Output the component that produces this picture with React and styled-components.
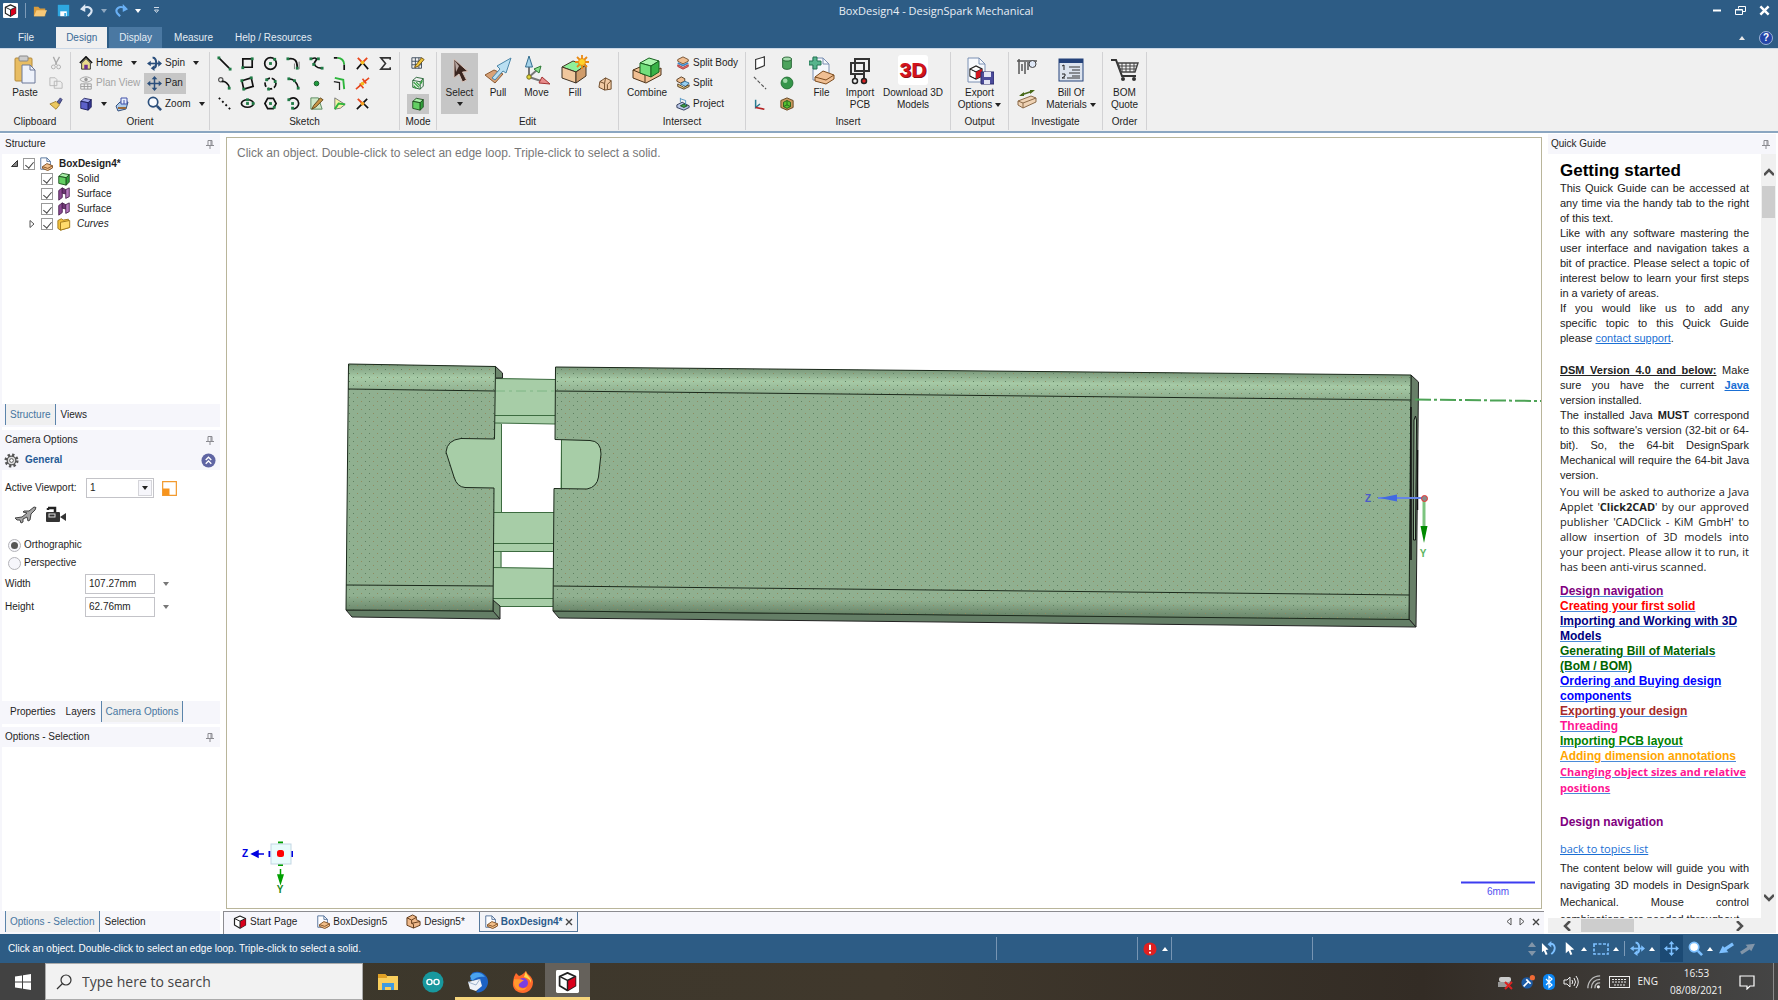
import {useState} from 'react'
import styled, { createGlobalStyle } from 'styled-components'


const UI = '"Liberation Sans", Arial, sans-serif'
const HUMAN = '"Open Sans", "Noto Sans", sans-serif'

const BLUE = '#2d5c85'
const PALE = '#f6f6fb'


const GlobalStyle = createGlobalStyle`
  * { box-sizing: border-box; }
  body {
    margin: 0;
    background: #fff;
    color: #1e1e1e;
    font-family: ${UI};
    font-size: 10px;
    line-height: 14px;
  }
  button, input, select { font: inherit; color: inherit; }
  button {
    padding: 0;
    border: 0;
    background: none;
    display: flex;
    align-items: center;
    white-space: nowrap;
  }
  svg { display: block; flex: none; }
`

const Page = styled.div`
  height: 100vh;
  display: flex;
  flex-direction: column;
  overflow: hidden;
`


/* ---------- small drawings ---------- */

const Svg = ({ s = 14, w, h, box = '0 0 16 16', children }) => (
  <svg width={w || s} height={h || s} viewBox={box} fill="none" aria-hidden="true">{children}</svg>
)

const Cube = ({ top = '#a8f0a8', left = '#63cf63', right = '#2fa03a', line = '#1b4d1b', ...rest }) => (
  <Svg {...rest}>
    <g stroke={line} strokeLinejoin="round">
      <path d="M2 5 6 1.500 14 3 10.500 6.500Z" fill={top} />
      <path d="M2 5 10.500 6.500V15L2 13Z" fill={left} />
      <path d="M10.500 6.500 14 3V11.500L10.500 15Z" fill={right} />
    </g>
  </Svg>
)

const Logo = ({ s = 16, plain }) => (
  <Svg s={s} box={plain ? '1.500 1 13 14' : '0 0 16 16'}>
    {!plain && <rect width="16" height="16" rx="1" fill="#fff" />}
    <path d="M8 2 13.500 4.500V11L8 14.200 2.500 11V4.500Z" fill="#fff" stroke="#222" strokeWidth="1.200" strokeLinejoin="round" />
    <path d="M8 7.200 13.500 4.700V11L8 14.200Z" fill="#d9001b" />
    <path d="M2.500 4.500 8 7.200 13.500 4.500M8 7.200V14" stroke="#222" />
  </Svg>
)

const Caret = ({ color = '#222', up }) => (
  <Svg w={6} h={4} box="0 0 6 4"><path d={up ? 'M0 4H6L3 0Z' : 'M0 0H6L3 4Z'} fill={color} /></Svg>
)

const DocIcon = ({ s = 14 }) => (
  <Svg s={s}>
    <path d="M2 1H9L13 5V14H2Z" fill="#fdfdff" stroke="#4a6a95" />
    <path d="M9 1V5H13" stroke="#4a6a95" />
    <path d="M4 11 9 7.500 15.500 10V12.500L10 15.500 4 13Z" fill="#f2bf8a" stroke="#7c4c1f" />
    <path d="M4 11 10 13 15.500 10" stroke="#7c4c1f" />
  </Svg>
)

const SolidIcon = ({ s = 16 }) => (
  <Svg s={s}>
    <path d="M1 4 7 1 11 3 11 6 15 8V12L8 15 1 12Z" fill="#efb98a" stroke="#5e3817" strokeLinejoin="round" />
    <path d="M1 4 6 6.500 11 3.500M6 6.500V10L15 8M6 10 8 11V15" stroke="#5e3817" />
  </Svg>
)

const PanIcon = ({ color = '#2b4f7c', s = 15 }) => (
  <Svg s={s}>
    <path d="M8 2V14M2 8H14" stroke={color} strokeWidth="1.600" />
    <path d="M8 0 11 3.500H5ZM8 16 5 12.500H11ZM0 8 3.500 5V11ZM16 8 12.500 11V5Z" fill={color} />
  </Svg>
)

const SpinIcon = ({ color = '#2b4f7c', s = 15 }) => (
  <Svg s={s}>
    <path d="M2 8H14" stroke={color} strokeWidth="1.800" />
    <path d="M6 2C10.500 1 11 11 7.500 13" stroke={color} strokeWidth="2.200" />
    <path d="M0 8 4 5V11ZM16 8 12 11.500V4.500ZM4 13 8 9.500V16Z" fill={color} />
  </Svg>
)

const ZoomIcon = ({ color = '#2b4f7c', fill = '#f8fbff', s = 15 }) => (
  <Svg s={s}>
    <circle cx="6.500" cy="6.500" r="5" fill={fill} stroke={color} strokeWidth="1.800" />
    <path d="M10.500 10.500 15 15" stroke={color} strokeWidth="2.800" />
  </Svg>
)

const PinIcon = () => (
  <Svg w={8} h={9} box="0 0 8 9"><path d="M2 .5H6V5.500M2 .5V5.500M0 5.500H8M4 5.500V9M5 1V5" stroke="#8a8a90" /></Svg>
)

const D = ({ at }) => at.map(([x, y]) => <rect key={`${x},${y}`} x={x - 1.5} y={y - 1.5} width="3" height="3" fill="#1f7a45" />)
const INK = { stroke: '#111', strokeWidth: 1.8 }

const Sketch = {
  line: <><path d="M2 2 13 13" {...INK} /><D at={[[2, 2], [14, 14]]} /></>,
  rect: <><path d="M3 3H13V12H3Z" {...INK} /><D at={[[3, 12.5], [13, 3]]} /></>,
  circle: <><circle cx="8" cy="8" r="6.200" {...INK} /><D at={[[8, 8], [12.5, 3.5]]} /></>,
  arc: <><path d="M3 3C9 2 12 5 12 12" {...INK} /><D at={[[2, 3], [12, 13]]} /><path d="M9 8V14M14 6V14" stroke="#777" /></>,
  spline: <><path d="M3 3C8 1 9 3 6.500 6 4 9 8 13 13 13" {...INK} /><D at={[[2, 3], [10, 3], [5, 9], [14, 13]]} /></>,
  corner: <><path d="M2 2H6M13 9V15" {...INK} /><path d="M6 2C10 2 13 5 13 9" stroke="#2db53c" strokeWidth="2" /></>,
  trim: <><path d="M2 14 8 7 14 14" {...INK} /><path d="M3 2 8 7 13 2" stroke="#e9471d" strokeWidth="2" /><circle cx="8" cy="7" r="2" fill="#f5bb20" /></>,
  sigma: <path d="M13 4V2H3L8 8 3 14H13V12" stroke="#333" strokeWidth="1.700" />,
  tangent: <><circle cx="4" cy="4" r="2.300" stroke="#555" strokeWidth="1.300" /><path d="M5 6C8 5 13 8 13 13" {...INK} /><D at={[[13, 13]]} /></>,
  rect3: <><path d="M2 5 12 2 14 11 4 14Z" {...INK} /><D at={[[2, 5], [12, 2], [4, 14]]} /></>,
  circle3: <><circle cx="8" cy="8" r="5.800" {...INK} strokeDasharray="5 2" /><D at={[[4, 4], [13, 6], [6, 14]]} /></>,
  arc3: <><path d="M3 3C8 3 12 7 13 13" {...INK} /><D at={[[3, 3], [9, 5], [13, 13]]} /></>,
  point: <circle cx="8" cy="8" r="2.500" fill="#1f9a3d" stroke="#175c2a" />,
  offset: <><path d="M2 6 8 7V15" stroke="#222" strokeWidth="1.300" /><path d="M3 2 12 4 13 14" stroke="#2db53c" strokeWidth="2" /></>,
  split: <><path d="M3 12 12 4" stroke="#222" /><path d="M1 14 7 9M9 7 15 2M5 8 9 13M8 3 12 8" stroke="#e9471d" strokeWidth="1.700" /><circle cx="8" cy="8" r="2" fill="#f5bb20" /></>,
  dots: <path d="M2 2 14 14" stroke="#111" strokeWidth="2" strokeDasharray="2 3" />,
  ellipse: <><ellipse cx="8" cy="8" rx="6.500" ry="4" {...INK} /><D at={[[8, 8], [8, 4], [14, 8]]} /></>,
  polygon: <><path d="M5 2.500H11L14 8 11 13.500H5L2 8Z" {...INK} /><D at={[[8, 8], [12, 12]]} /></>,
  arcSweep: <><path d="M3 4C9-1 15 5 13 10 11 14 8 14 7 13" {...INK} /><D at={[[3, 4], [7, 8], [7, 13]]} /></>,
  pencil: <><path d="M2 2H10L14 14H2Z" fill="#cfe8c8" stroke="#57875c" /><path d="M3 14 5 10 12 2 15 4 7 12Z" fill="#c89545" stroke="#5c4215" /></>,
  project: <><path d="M3 2 14 9 9 13 3 14Z" fill="#f4f4a8" stroke="#777" /><path d="M3 14 7 8 14 9" stroke="#2db53c" strokeWidth="2" /></>,
  bend: <><path d="M2 14 13 3M9 8 14 13" {...INK} /><path d="M3 3 8 8" stroke="#e9471d" strokeWidth="2" /><circle cx="8" cy="8" r="2" fill="#f5a020" /></>,
}
const sketchOrder = [
  'line', 'rect', 'circle', 'arc', 'spline', 'corner', 'trim', 'sigma',
  'tangent', 'rect3', 'circle3', 'arc3', 'point', 'offset', 'split', null,
  'dots', 'ellipse', 'polygon', 'arcSweep', 'pencil', 'project', 'bend', null,
]


/* ---------- title bar and tabs ---------- */

const TitleBar = styled.header`
  height: 27px;
  flex: none;
  display: flex;
  align-items: center;
  padding: 0 8px 6px 3px;
  background: ${BLUE};
  color: #e8eef5;
`
const QuickAccess = styled.div`
  display: flex;
  align-items: center;
  gap: 7px;
`
const Spaced = styled.span`
  padding-right: 3px;
`
const Rule = styled.span`
  width: 1px;
  height: 15px;
  background: #7d9bb8;
`
const WindowButtons = styled.div`
  display: flex;
  gap: 13px;
`
const AppTitle = styled.h1`
  flex: 1;
  margin: 0;
  text-align: center;
  font: 11px/14px ${HUMAN};
`
const TabRow = styled.nav`
  height: 21px;
  flex: none;
  display: flex;
  gap: 2px;
  padding-right: 5px;
  background: ${BLUE};
`
const RibbonTab = styled.button`
  padding: 0 10px;
  background: ${p => p.$active ? '#f0f0f0' : p.$hover ? '#4a78a2' : 'none'};
  color: ${p => p.$active ? '#3a6a97' : '#e4ecf4'};
  &:first-child { padding: 0 20px 0 18px; }
`
const TabEnd = styled.div`
  margin-left: auto;
  display: flex;
  align-items: center;
  gap: 14px;
`
const HelpDot = styled.button`
  width: 14px;
  height: 14px;
  justify-content: center;
  border: 1px solid #9db4d6;
  border-radius: 50%;
  background: #2445a8;
  color: #fff;
  font-weight: bold;
`


/* ---------- ribbon ---------- */

const Ribbon = styled.section`
  height: 85px;
  flex: none;
  display: flex;
  padding: 3px 0 1px;
  border-top: 1px solid #ccd8e6;
  border-bottom: 2px solid #8ba6c1;
  background: #f0f0f0;
`
const Group = styled.div`
  width: ${p => p.$w}px;
  display: flex;
  flex-direction: column;
  border-right: 1px solid #d2d2d4;
`
const GroupBody = styled.div`
  height: 62px;
  flex: none;
  display: flex;
  padding: 1px 0 0 ${p => p.$pad || 0}px;
`
const GroupName = styled.div`
  text-align: center;
  line-height: 16px;
`
const BigButton = styled.button`
  width: ${p => p.$w}px;
  height: 61px;
  flex-direction: column;
  justify-content: flex-start;
  background: ${p => p.$on ? '#c6c6c6' : 'none'};
  line-height: 12px;
  text-align: center;
`
const BigPicture = styled.span`
  height: 34px;
  display: grid;
  place-items: center;
`
const BigLabel = styled.span`
  display: flex;
  align-items: center;
  gap: 3px;
`
const ToolColumn = styled.div`
  width: ${p => p.$w ? `${p.$w}px` : 'auto'};
  display: grid;
  grid-template-rows: repeat(${p => p.$rows || 3}, 1fr);
  justify-items: ${p => p.$center ? 'center' : 'start'};
`
const Tool = styled.button`
  gap: 3px;
  padding: 0 3px;
  min-width: ${p => p.$square ? '22px' : '0'};
  justify-content: center;
  background: ${p => p.$on ? '#c6c6c6' : 'none'};
  color: ${p => p.$off ? '#a3a3a3' : 'inherit'};
  > svg + svg, > span + svg { margin-left: 5px; }
`
const SketchGrid = styled.div`
  display: grid;
  grid-template-columns: repeat(8, 23px);
  grid-template-rows: repeat(3, 1fr);
`

const Big = ({ w, on, icon, lines, caret }) => (
  <BigButton $w={w} $on={on}>
    <BigPicture>{icon}</BigPicture>
    {lines.map((l, i) => (
      <BigLabel key={l}>{l}{caret === 'inline' && i === lines.length - 1 && <Caret />}</BigLabel>
    ))}
    {caret === 'below' && <Svg w={6} h={8} box="0 0 6 8"><path d="M0 3H6L3 7Z" fill="#222" /></Svg>}
  </BigButton>
)

const PasteIcon = (
  <Svg w={24} h={30} box="0 0 24 30">
    <rect x="2" y="3" width="17" height="23" rx="1" fill="#e8bd63" stroke="#b48a3a" />
    <rect x="6" y="1" width="9" height="5" rx="1" fill="#ccc" stroke="#888" />
    <path d="M9 10H17L22 15V28H9Z" fill="#eef2fb" stroke="#6d7898" />
    <path d="M17 10V15H22" stroke="#6d7898" />
  </Svg>
)
const SelectIcon = (
  <Svg w={24} h={30} box="0 0 24 30">
    <path d="M6 4 20 16.500 14.500 17 18.500 25 14.500 27 11 19 6 23Z" fill="#3a2620" stroke="#d8c0b5" />
    <path d="M7 6 11 11 8 17Z" fill="#b9a8a3" />
  </Svg>
)
const PullIcon = (
  <Svg w={30} h={30} box="0 0 30 30">
    <path d="M2 20 11 15 20 19 12 28Z" fill="#d8a277" stroke="#8b5a33" />
    <path d="M9 23 17 14 14 11 28 3 23 18 20 16 12 25Z" fill="#b9dff2" stroke="#4b86a8" strokeLinejoin="round" />
  </Svg>
)
const MoveIcon = (
  <Svg w={28} h={30} box="0 0 28 30">
    <path d="M6 22V9M6 22 14 15M6 22 18 26" stroke="#777" strokeWidth="2" />
    <path d="M6 1 9.500 12H2.500Z" fill="#a5d3ea" stroke="#356f90" />
    <path d="M18 11 16 18 11 14Z" fill="#8be08b" stroke="#2c7a35" />
    <path d="M27 29 16 28 19 22Z" fill="#e88b8b" stroke="#a33333" />
    <circle cx="6" cy="22" r="2.200" fill="#e0d53a" stroke="#77701a" />
  </Svg>
)
const FillIcon = (
  <Svg w={30} h={30} box="0 0 30 30">
    <g stroke="#3f3324" strokeLinejoin="round">
      <path d="M2 12 13 6 26 10 16 17Z" fill="#8ff09a" />
      <path d="M2 12 16 17V28L2 23Z" fill="#f0c79d" />
      <path d="M16 17 26 10V21L16 28Z" fill="#cf9c6b" />
    </g>
    <path d="M22 0V14M15 7H29M17 2 27 12M27 2 17 12" stroke="#e98a15" strokeWidth="1.800" />
    <circle cx="22" cy="7" r="3.500" fill="#ffd32a" stroke="#e98a15" />
  </Svg>
)
const CombineIcon = (
  <Svg w={32} h={30} box="0 0 32 30">
    <path d="M2 15 9 12 16 20 30 13V20L15 28 2 23Z" fill="#f0bf93" stroke="#4d3218" strokeLinejoin="round" />
    <path d="M2 15 14 20V27" stroke="#4d3218" />
    <g stroke="#17601f" strokeLinejoin="round">
      <path d="M9 8 18 3 28 6 20 11Z" fill="#a9f5ad" />
      <path d="M9 8 20 11V22L9 18Z" fill="#72df7c" />
      <path d="M20 11 28 6V17L20 22Z" fill="#37b246" />
    </g>
  </Svg>
)
const FileIcon = (
  <Svg w={26} h={30} box="0 0 26 30">
    <path d="M4 3H14L20 9V25H4Z" fill="#f4f7fc" stroke="#7b90b3" />
    <path d="M14 3V9H20" stroke="#7b90b3" />
    <path d="M6 22 14 16 25 20V24L17 29 6 26Z" fill="#f0bf93" stroke="#7c4c1f" />
    <path d="M6 22 17 25 25 20" stroke="#7c4c1f" />
    <path d="M4 2H8V6H12V10H8V14H4V10H0V6H4Z" fill="#56b48c" stroke="#237453" />
  </Svg>
)
const PcbIcon = (
  <Svg w={24} h={30} box="0 0 24 30">
    <path d="M7 4H21V16H7ZM3 8H16V19H3Z" stroke="#333" strokeWidth="2" />
    <path d="M7 19V24M16 19V24" stroke="#333" strokeWidth="2" />
    <circle cx="7" cy="26" r="2.500" stroke="#222" strokeWidth="1.500" />
    <circle cx="16" cy="26" r="2.500" fill="#d22" stroke="#222" strokeWidth="1.500" />
  </Svg>
)
const ThreeD = styled.span`
  width: 30px;
  height: 30px;
  display: grid;
  place-items: center;
  border-radius: 3px;
  background: #fff;
  color: #d3131d;
  font: bold 21px/30px ${UI};
  text-shadow: 1px 1px 0 #8d0c13;
`
const ExportIcon = (
  <Svg w={28} h={30} box="0 0 28 30">
    <path d="M2 3H13L19 9V27H2Z" fill="#f7f9fd" stroke="#7b90b3" />
    <path d="M13 3V9H19" stroke="#7b90b3" />
    <path d="M4 14 10 11 16 14V21L10 24 4 21ZM4 14 10 17 16 14M10 17V24" fill="#fff" stroke="#222" strokeWidth="1.300" />
    <path d="M4.500 15 9.500 17.500V23L4.500 20.500Z" fill="#fff" />
    <path d="M10 17 16 14V21L10 24Z" fill="#d3131d" />
    <path d="M15 17H28V29H15Z" fill="#4b4b9a" stroke="#2d2d6d" />
    <path d="M18 17H25V22H18ZM18 25H24V29H18Z" fill="#e3e4f4" />
  </Svg>
)
const BomIcon = (
  <Svg w={26} h={30} box="0 0 26 30">
    <rect x="1" y="4" width="24" height="22" fill="#dce3ee" stroke="#24427a" />
    <path d="M1 6H25" stroke="#24427a" strokeWidth="4" />
    <path d="M11 12H22M14 15H22M11 18H22M14 21H22M9 23H22" stroke="#333" />
    <path d="M4 11 6 10V15M4 19H7V21L4 23H7" stroke="#222" />
  </Svg>
)
const CartIcon = (
  <Svg w={30} h={30} box="0 0 30 30">
    <path d="M1 5H6L12 21H26" stroke="#333" strokeWidth="2" />
    <path d="M8 8H28L25 17H11Z" stroke="#444" strokeWidth="1.400" />
    <path d="M12 8V17M16 8V17M20 8V17M24 8V17M9 11H27M10 14H26" stroke="#444" />
    <circle cx="13" cy="24" r="2" fill="#333" /><circle cx="24" cy="24" r="2" fill="#333" />
  </Svg>
)

const RibbonBar = () => (
  <Ribbon>
    <Group $w={71}>
      <GroupBody $pad={2}>
        <Big w={46} icon={PasteIcon} lines={['Paste']} />
        <ToolColumn $w={16} $center>
          <Tool aria-label="Cut"><Svg><path d="M5 1 9 10M12 1 7 10" stroke="#aaa" strokeWidth="1.500" /><circle cx="5" cy="12.500" r="2.200" stroke="#aaa" /><circle cx="11" cy="12.500" r="2.200" stroke="#aaa" /></Svg></Tool>
          <Tool aria-label="Copy"><Svg><path d="M1 2H7L9 4V11H1ZM6 6H13L15 8V14H6Z" fill="#eee" stroke="#b5b5b5" /></Svg></Tool>
          <Tool aria-label="Format painter"><Svg><path d="M9 6 13 1 15 3 12 8Z" fill="#5a5fa0" stroke="#33386d" /><path d="M1 8 8 5 12 9 8 14Z" fill="#ecc85f" stroke="#a27e2a" /></Svg></Tool>
        </ToolColumn>
      </GroupBody>
      <GroupName>Clipboard</GroupName>
    </Group>

    <Group $w={139}>
      <GroupBody $pad={5}>
        <ToolColumn $w={68}>
          <Tool><Svg><path d="M1 8 8 1 15 8" stroke="#111" strokeWidth="2" /><path d="M3 8V15H13V8L8 3Z" fill="#e8d98b" stroke="#222" /><path d="M6 15V10H10V15" fill="#6c2f8f" /></Svg><span>Home</span><Caret /></Tool>
          <Tool $off><Svg><path d="M1 4C5 0 11 0 15 4 11 8 5 8 1 4Z" stroke="#999" /><circle cx="8" cy="4" r="2" fill="#999" /><path d="M2 9H14V15H2ZM2 12H14M6 9V15M10 9V15" stroke="#999" /></Svg><span>Plan View</span></Tool>
          <Tool aria-label="Face view"><Cube top="#9aa0ea" left="#5c60c9" right="#34368f" line="#1d1e5a" /><Caret /><Svg s={16}><path d="M1 10 5 6H13L11 13 3 15Z" fill="#aecdec" stroke="#35507d" /><path d="M3 12H11" stroke="#9a6a3c" strokeWidth="2" /><path d="M6 2H12V8H6ZM9 4V8" fill="#e9f1ff" stroke="#4050a8" /></Svg></Tool>
        </ToolColumn>
        <ToolColumn>
          <Tool><SpinIcon /><span>Spin</span><Caret /></Tool>
          <Tool $on><PanIcon /><span>Pan</span></Tool>
          <Tool><ZoomIcon /><span>Zoom</span><Caret /></Tool>
        </ToolColumn>
      </GroupBody>
      <GroupName>Orient</GroupName>
    </Group>

    <Group $w={190}>
      <GroupBody $pad={3}>
        <SketchGrid>
          {sketchOrder.map((name, i) => name
            ? <Tool key={name} aria-label={name}><Svg s={15}>{Sketch[name]}</Svg></Tool>
            : <span key={i} />)}
        </SketchGrid>
      </GroupBody>
      <GroupName>Sketch</GroupName>
    </Group>

    <Group $w={37}>
      <GroupBody $pad={7}>
        <ToolColumn $center>
          <Tool $square aria-label="Sketch mode"><Svg><path d="M1 2H12V14H1ZM1 6H12M1 10H12M5 2V14M9 2V14" stroke="#345" /><path d="M5 11 12 2 15 4 8 12 4 13Z" fill="#edc33b" stroke="#6b4d10" /></Svg></Tool>
          <Tool $square aria-label="Section mode"><Svg><path d="M2 5 6 1.500 14 3 10.500 6.500ZM2 5V13L10.500 15V6.500M10.500 15 14 11.500V3" stroke="#1b5d2b" /><path d="M3 7 9 13M6 7 10 11M3 11 6 14M11 9 13 5" stroke="#2fa03a" strokeWidth="1.500" /></Svg></Tool>
          <Tool $square $on aria-label="3D mode"><Cube /></Tool>
        </ToolColumn>
      </GroupBody>
      <GroupName>Mode</GroupName>
    </Group>

    <Group $w={182}>
      <GroupBody $pad={4}>
        <Big w={37} on icon={SelectIcon} lines={['Select']} caret="below" />
        <Big w={40} icon={PullIcon} lines={['Pull']} />
        <Big w={37} icon={MoveIcon} lines={['Move']} />
        <Big w={40} icon={FillIcon} lines={['Fill']} />
        <ToolColumn $w={20} $rows={1}>
          <Tool aria-label="Shell"><Svg s={15}><path d="M2 6 8 2 14 5V14L7 15 1 12Z" fill="#f2cba5" stroke="#6b4726" /><path d="M2 6 7 8 8 2M7 8V15M14 5 10 9V14" stroke="#6b4726" /></Svg></Tool>
        </ToolColumn>
      </GroupBody>
      <GroupName>Edit</GroupName>
    </Group>

    <Group $w={127}>
      <GroupBody $pad={2}>
        <Big w={52} icon={CombineIcon} lines={['Combine']} />
        <ToolColumn>
          <Tool><Svg><path d="M2 4 8 1 14 4V6L8 9 2 6Z" fill="#f0bf93" stroke="#6b4726" /><path d="M2 8 8 11 14 8" stroke="#3a86c8" strokeWidth="2" /><path d="M2 10 8 13 14 10V12L8 15 2 12Z" fill="#e57777" stroke="#a33" /></Svg><span>Split Body</span></Tool>
          <Tool><Svg><path d="M1 4 6 1 10 3V6L5 8 1 6Z" fill="#f0bf93" stroke="#4d3218" /><path d="M5 9 10 6 15 8 11 12Z" fill="#9bd0f0" stroke="#2d6a95" /><path d="M2 9V12L9 15 15 12V10L9 13Z" fill="#e9d085" stroke="#4d3218" /></Svg><span>Split</span></Tool>
          <Tool><Svg><path d="M1 9 7 6 15 10V12L9 15 1 12Z" fill="#b9c7e8" stroke="#26304f" /><path d="M5 10 9 8 13 10 9 12Z" fill="#3aa04a" stroke="#1b4d1b" /><path d="M5 1V6M5 2 11 4V9" stroke="#4a90c0" /></Svg><span>Project</span></Tool>
        </ToolColumn>
      </GroupBody>
      <GroupName>Intersect</GroupName>
    </Group>

    <Group $w={205}>
      <GroupBody $pad={1}>
        <ToolColumn $w={26} $center>
          <Tool aria-label="Plane"><Svg><path d="M3 4 13 1V11L3 15Z" fill="#fff" stroke="#333" strokeWidth="1.300" /></Svg></Tool>
          <Tool aria-label="Axis"><Svg><path d="M1 1 15 15" stroke="#555" strokeWidth="1.300" strokeDasharray="4 2" /></Svg></Tool>
          <Tool aria-label="Origin"><Svg><path d="M3 3V12L8 8" stroke="#287a8f" strokeWidth="1.700" /><path d="M3 12 13 14" stroke="#b52222" strokeWidth="2" /></Svg></Tool>
        </ToolColumn>
        <ToolColumn $w={27} $center>
          <Tool aria-label="Cylinder"><Svg><path d="M3 3V13C4 16 12 16 13 13V3Z" fill="#4da35d" stroke="#1f5e2d" /><ellipse cx="8" cy="3.500" rx="5" ry="2.300" fill="#a6dcae" stroke="#1f5e2d" /></Svg></Tool>
          <Tool aria-label="Sphere"><Svg><circle cx="8" cy="8" r="6.800" fill="#35954a" stroke="#1f6b30" /><circle cx="6" cy="5.500" r="2.600" fill="#9fd9a8" /></Svg></Tool>
          <Tool aria-label="Shell box"><Svg><path d="M8 1 15 4V12L8 15 1 12V4Z" fill="#c99a5e" stroke="#5b3c16" /><path d="M8 4 12 6V11L8 13 4 11V6Z" fill="#57c02f" stroke="#1f5e1b" /><path d="M8 4V9L4 11M8 9 12 11" stroke="#1f5e1b" /></Svg></Tool>
        </ToolColumn>
        <Big w={43} icon={FileIcon} lines={['File']} />
        <Big w={34} icon={PcbIcon} lines={['Import', 'PCB']} />
        <Big w={72} icon={<ThreeD>3D</ThreeD>} lines={['Download 3D', 'Models']} />
      </GroupBody>
      <GroupName>Insert</GroupName>
    </Group>

    <Group $w={58}>
      <GroupBody>
        <Big w={57} icon={ExportIcon} lines={['Export', 'Options']} caret="inline" />
      </GroupBody>
      <GroupName>Output</GroupName>
    </Group>

    <Group $w={94}>
      <GroupBody $pad={4}>
        <ToolColumn $w={28} $rows={2} $center>
          <Tool aria-label="Measure"><Svg w={22} h={20} box="0 0 22 20"><path d="M1 3H21M3 1V16M6 6V13M9 4V16M12 4V12" stroke="#555" strokeWidth="1.500" /><circle cx="16.500" cy="6" r="3.500" fill="#dfe8f7" stroke="#444" /></Svg></Tool>
          <Tool aria-label="Dimension"><Svg w={20} h={20} box="0 0 20 20"><path d="M1 12 14 7 19 9V13L6 19 1 16Z" fill="#efd3b5" stroke="#8b6a48" /><path d="M1 12 6 14 19 9M6 14V19" stroke="#8b6a48" /><path d="M4 6 16 2" stroke="#4a6a1a" strokeWidth="1.500" /><path d="M2 7 7 3V7ZM18 1 13 1V5Z" fill="#4a6a1a" /></Svg></Tool>
        </ToolColumn>
        <Big w={60} icon={BomIcon} lines={['Bill Of', 'Materials']} caret="inline" />
      </GroupBody>
      <GroupName>Investigate</GroupName>
    </Group>

    <Group $w={44}>
      <GroupBody>
        <Big w={43} icon={CartIcon} lines={['BOM', 'Quote']} />
      </GroupBody>
      <GroupName>Order</GroupName>
    </Group>
  </Ribbon>
)


/* ---------- left docks ---------- */

const Workspace = styled.main`
  flex: 1;
  min-height: 0;
  display: flex;
  padding-top: 1px;
`
const LeftDock = styled.aside`
  width: 223px;
  flex: none;
  display: flex;
  flex-direction: column;
  gap: 3px;
  padding-right: 3px;
  border-left: 2px solid ${PALE};
`
const Panel = styled.section`
  flex: ${p => p.$grow} 1 0;
  min-height: 0;
  display: flex;
  flex-direction: column;
`
const PanelTitle = styled.h2`
  margin: 0;
  height: 20px;
  flex: none;
  display: flex;
  justify-content: space-between;
  align-items: center;
  padding: 0 6px 0 3px;
  background: ${PALE};
  font-size: 10px;
  font-weight: normal;
`
const PanelBody = styled.div`
  flex: 1;
  min-height: 0;
`
const PanelTabs = styled.div`
  height: 23px;
  flex: none;
  display: flex;
  padding: 0 3px 2px;
  background: ${PALE};
`
const PanelTab = styled.button`
  padding: 0 4px;
  border: solid ${p => p.$on ? '#5b84ab' : 'transparent'};
  border-width: 0 1px;
  background: ${p => p.$on ? '#f0f0f0' : 'none'};
  color: ${p => p.$on ? '#4776a0' : 'inherit'};
`
const Tree = styled.ul`
  margin: 0;
  padding: 2px 0;
  list-style: none;
`
const Leaf = styled.li`
  height: 15px;
  display: flex;
  align-items: center;
  gap: 5px;
  padding-left: ${p => p.$root ? 9 : 27}px;
  font-weight: ${p => p.$root ? 'bold' : 'normal'};
  font-style: ${p => p.$italic ? 'italic' : 'normal'};
  label { display: flex; align-items: center; gap: 4px; }
  label > span { padding-left: 2px; }
`
const Tick = styled.input`
  appearance: none;
  width: 12px;
  height: 12px;
  margin: 0;
  display: grid;
  place-items: center;
  border: 1px solid #9a9a9a;
  background: #fff;
  &:checked::after {
    content: '';
    width: 4px;
    height: 7px;
    border: solid #444;
    border-width: 0 1px 1px 0;
    transform: rotate(40deg);
  }
`
const Twisty = styled.span`
  width: 7px;
`
const SubTitle = styled.h3`
  margin: 0;
  height: 20px;
  flex: none;
  display: flex;
  align-items: center;
  gap: 6px;
  padding: 0 4px 0 2px;
  background: ${PALE};
  color: #245a94;
  font-size: 10px;
  > button { margin-left: auto; }
`
const Form = styled.form`
  padding: 8px 0 0 3px;
`
const FormRow = styled.div`
  height: ${p => p.$h}px;
  display: grid;
  grid-template-columns: ${p => p.$cols || '80px 70px auto'};
  align-items: center;
  justify-content: start;
`
const Combo = styled.span`
  height: 20px;
  display: flex;
  align-items: center;
  border: 1px solid #c3c3c8;
  background: #fff;
  select {
    flex: 1;
    min-width: 0;
    padding: 0 3px;
    appearance: none;
    border: 0;
    background: none;
  }
  > span {
    width: 14px;
    height: 16px;
    margin-right: 1px;
    display: grid;
    place-items: center;
    border: 1px solid #d5d5da;
    background: ${PALE};
  }
`
const Field = styled.input`
  height: 20px;
  min-width: 0;
  padding: 0 3px;
  border: 1px solid #c3c3c8;
  background: #fff;
`
const IconRow = styled.div`
  height: 34px;
  display: flex;
  align-items: center;
  gap: 8px;
  margin-bottom: 4px;
  padding-left: 9px;
`
const RadioLabel = styled.label`
  height: 18px;
  display: flex;
  align-items: center;
  gap: 3px;
  padding-left: 3px;
`
const Radio = styled.input`
  appearance: none;
  width: 13px;
  height: 13px;
  margin: 0;
  display: grid;
  place-items: center;
  border: 1px solid #b3b3b8;
  border-radius: 50%;
  background: ${PALE};
  &:checked::after {
    content: '';
    width: 7px;
    height: 7px;
    border-radius: 50%;
    background: #555;
  }
`
const Indent = styled.span`
  padding-left: 8px;
`

const SurfaceIcon = () => (
  <Svg><path d="M2 4 6 1V12L2 15Z" fill="#8d4a94" stroke="#47204d" /><path d="M6 1 10 3V8L6 7Z" fill="#6f3576" stroke="#47204d" /><path d="M10 3 14 1V11L10 13Z" fill="#b77abf" stroke="#47204d" /></Svg>
)
const FolderIcon = ({ s = 14 }) => (
  <Svg s={s}><path d="M1 4 5 2 7 3.500 13 2.500 14 12 4 15 1 13Z" fill="#f3c23d" stroke="#9a7416" /><path d="M4 6 14.500 4V12L4 15Z" fill="#ffdc6d" stroke="#9a7416" /></Svg>
)

const leaves = [
  { name: 'Solid', icon: <Cube /> },
  { name: 'Surface', icon: <SurfaceIcon /> },
  { name: 'Surface', icon: <SurfaceIcon /> },
  { name: 'Curves', icon: <FolderIcon />, italic: true, closed: true },
]

const StructurePanel = () => (
  <Panel $grow={293}>
    <PanelTitle>Structure<PinIcon /></PanelTitle>
    <PanelBody>
      <Tree>
        <Leaf $root>
          <Twisty><Svg w={7} h={7} box="0 0 7 7"><path d="M6.500 .5V6.500H.5Z" fill="#888" stroke="#333" /></Svg></Twisty>
          <label><Tick type="checkbox" defaultChecked /><DocIcon /><span>BoxDesign4*</span></label>
        </Leaf>
        {leaves.map((l, i) => (
          <Leaf key={i} $italic={l.italic}>
            <Twisty>{l.closed && <Svg w={6} h={8} box="0 0 6 8"><path d="M1 .5V7.500L5 4Z" stroke="#555" /></Svg>}</Twisty>
            <label><Tick type="checkbox" defaultChecked />{l.icon}<span>{l.name}</span></label>
          </Leaf>
        ))}
      </Tree>
    </PanelBody>
    <PanelTabs><PanelTab $on>Structure</PanelTab><PanelTab>Views</PanelTab></PanelTabs>
  </Panel>
)

const CameraPanel = () => {
  const [projection, setProjection] = useState('Orthographic')
  return (
    <Panel $grow={294}>
      <PanelTitle>Camera Options<PinIcon /></PanelTitle>
      <SubTitle>
        <Svg s={15}><circle cx="8" cy="8" r="6" stroke="#555" strokeWidth="3" strokeDasharray="2.400 2.300" /><circle cx="8" cy="8" r="4.600" fill="#ddd" stroke="#555" strokeWidth="1.300" /><circle cx="8" cy="8" r="2" fill="#fff" stroke="#555" /></Svg>
        General
        <button aria-label="Collapse"><Svg s={15}><circle cx="8" cy="8" r="7.500" fill="#5f65a3" /><path d="M5 7.500 8 4.500 11 7.500M5 11.500 8 8.500 11 11.500" stroke="#fff" strokeWidth="1.400" /></Svg></button>
      </SubTitle>
      <PanelBody>
        <Form>
          <FormRow $h={20} $cols="81px 68px auto">
            <label htmlFor="viewport">Active Viewport:</label>
            <Combo><select id="viewport"><option>1</option></select><span><Caret /></span></Combo>
            <Indent><Svg s={15}><path d="M.7.7H15.300V15.300H.7Z" fill="#fff" stroke="#f29a2e" strokeWidth="1.300" /><path d="M1 8H8V15H1Z" fill="#f7941d" /></Svg></Indent>
          </FormRow>
          <IconRow>
            <Svg w={23} h={18} box="0 0 23 18"><path d="M1 12 8 11 13 7 9 6 10 5 15 5 20 1 22 1.500 21 4 17 8 16 14 14 15 13 11 9 13 9 16 7 17 6 14 3 14Z" fill="#a5a5a5" stroke="#444" /></Svg>
            <Svg w={22} h={18} box="0 0 22 18"><path d="M3 2H10V6M3 2V4" stroke="#222" strokeWidth="2.500" /><rect x="1" y="6" width="14" height="10" rx="1" fill="#333" /><path d="M15 11 21 7V15Z" fill="#333" /><rect x="4" y="8" width="6" height="3" stroke="#ddd" /></Svg>
          </IconRow>
          {['Orthographic', 'Perspective'].map(p => (
            <RadioLabel key={p}>
              <Radio type="radio" name="projection" checked={projection === p} onChange={() => setProjection(p)} />{p}
            </RadioLabel>
          ))}
          <FormRow $h={23}>
            <label htmlFor="camW">Width</label><Field id="camW" defaultValue="107.27mm" /><Indent><Caret color="#777" /></Indent>
          </FormRow>
          <FormRow $h={23}>
            <label htmlFor="camH">Height</label><Field id="camH" defaultValue="62.76mm" /><Indent><Caret color="#777" /></Indent>
          </FormRow>
        </Form>
      </PanelBody>
      <PanelTabs><PanelTab>Properties</PanelTab><PanelTab>Layers</PanelTab><PanelTab $on>Camera Options</PanelTab></PanelTabs>
    </Panel>
  )
}


/* ---------- design window ---------- */

const Center = styled.section`
  flex: 1;
  min-width: 0;
  display: flex;
  flex-direction: column;
  gap: 2px;
  padding-top: 3px;
`
const Viewport = styled.div`
  flex: 1;
  min-height: 0;
  margin: 0 2px 0 3px;
  position: relative;
  border: 1px solid #b9b59a;
  background: #fff;
  > svg { width: 100%; height: 100%; }
`
const Hint = styled.p`
  position: absolute;
  top: 8px;
  left: 10px;
  margin: 0;
  color: #777;
  font-size: 12px;
`
const DocTabs = styled.nav`
  height: 23px;
  flex: none;
  display: flex;
  align-items: flex-start;
  padding: 0 4px;
  border: solid #8c8c90;
  border-width: 1px 0 0 1px;
  background: ${PALE};
`
const DocTab = styled.button`
  height: 20px;
  gap: 3px;
  margin-right: 9px;
  padding: 0 4px;
  border: solid ${p => p.$on ? '#55789c' : 'transparent'};
  border-width: 0 1px 1px;
  background: ${p => p.$on ? '#f4f4f8' : 'none'};
  color: ${p => p.$on ? '#2a5a8a' : 'inherit'};
  font-weight: ${p => p.$on ? 'bold' : 'normal'};
`
const DocTabEnd = styled.div`
  margin-left: auto;
  height: 19px;
  display: flex;
  align-items: center;
  gap: 7px;
`
const Cross = ({ s = 8, color = '#444', width = 1.4 }) => (
  <Svg s={s} box="0 0 8 8"><path d="M1 1 7 7M7 1 1 7" stroke={color} strokeWidth={width} /></Svg>
)

const leftFace = 'M348.500 364 495.500 366.500 494.500 439 461 438.500Q447 440 446 452L454 477Q457 487 465 487.500L494 488 493 611 346 610Z'
const rightFace = 'M555.500 367 1411 375 1409 619.500 553 611 554 488.500 587 489Q597 487 598.500 477L601 454Q601 441 590 440.500L555 439.500Z'

const Model = () => (
  <svg viewBox="227 138 1314 770" fill="none" aria-label="BoxDesign4 model">
    <defs>
      <pattern id="dots" width="16" height="8" patternUnits="userSpaceOnUse">
        <path d="M1 1H2V2H1ZM13 5H14V6H13Z" fill="#5f7f5f" />
        <path d="M9 1H10V2H9ZM5 5H6V6H5Z" fill="#8f8a5e" />
      </pattern>
      <linearGradient id="round" x1="0" y1="0" x2="0" y2="1">
        <stop offset="0" stopColor="#7b997b" />
        <stop offset=".5" stopColor="#a6caa6" />
        <stop offset="1" stopColor="#90b090" />
      </linearGradient>
      <linearGradient id="under" x1="0" y1="0" x2="0" y2="1">
        <stop offset="0" stopColor="#90b090" />
        <stop offset=".4" stopColor="#90b090" />
        <stop offset="1" stopColor="#6a866a" />
      </linearGradient>
      <linearGradient id="roundLong" gradientUnits="userSpaceOnUse" x1="983" y1="371" x2="982.780" y2="395">
        <stop offset="0" stopColor="#7b997b" />
        <stop offset=".5" stopColor="#a6caa6" />
        <stop offset="1" stopColor="#90b090" />
      </linearGradient>
      <linearGradient id="underLong" gradientUnits="userSpaceOnUse" x1="981" y1="591" x2="980.760" y2="615">
        <stop offset="0" stopColor="#90b090" />
        <stop offset=".4" stopColor="#90b090" />
        <stop offset="1" stopColor="#6a866a" />
      </linearGradient>
    </defs>

    {/* inner tray seen through the gap */}
    <g fill="#a7cda7">
      <path d="M494 378 556 379.500V424L494 423Z" />
      <path d="M445 423H501.500V567H493V490H445Z" />
      <path d="M561 438H604V491H560Z" />
      <path d="M493 512H555V552H493ZM493 567 554 568V607L493 606Z" />
    </g>
    <path d="M495 378.500 555 379.500M495 415.500 555 415.500M495 423 555 424M501.500 424V512M561.500 440V488M494 512.500H554M493 543.500H554M493 551.500H554M501 552V567M493 567.500 554 568.500M493 598.500H554M497 606.500H554" stroke="#3c6b40" />
    <path d="M495 391H555" stroke="#7fb685" strokeDasharray="10 4 3 4" />

    <path d="M495 366 502.500 373V378H495ZM493 600 500 606V619L493 612Z" fill="#6c876c" stroke="#222" />
    <path d="M346 610 352 617 500 619 493 611Z" fill="#647e66" stroke="#222" />
    <path d={leftFace} fill="#90b090" />
    <path d="M348.500 364 495.500 366.500V391L348 389Z" fill="url(#round)" />
    <path d="M346.500 585 493 586V611L346 610Z" fill="url(#under)" />
    <path d={leftFace} fill="url(#dots)" stroke="#1c2a1c" />
    <path d="M348 389 495 391M346 585 493 586" stroke="#1c2a1c" />

    <path d="M553 611 559 618 1416 627 1409 619Z" fill="#647e66" stroke="#222" />
    <path d="M1411 375 1418.500 382 1416 627 1409 619Z" fill="#687f68" stroke="#222" />
    <path d={rightFace} fill="#90b090" />
    <path d="M555.500 367 1411 375V400L555 391Z" fill="url(#roundLong)" />
    <path d="M553.500 586 1409 595V620L553 611Z" fill="url(#underLong)" />
    <path d={rightFace} fill="url(#dots)" stroke="#1c2a1c" />
    <path d="M555 391 1411 400M553.500 586 1409 595" stroke="#1c2a1c" />
    <path d="M1411 407V560M1417.500 450V510" stroke="#111" strokeWidth="1.500" />
    <path d="M1414 420 1415.500 416 1416.500 420 1415.500 540H1413.500Z" fill="#9dc09d" stroke="#111" />
    <path d="M1415 399.500 1541 401" stroke="#4da356" strokeWidth="2" strokeDasharray="16 3 3 3" />

    {/* origin triad */}
    <path d="M1424 498H1378" stroke="#6685e6" strokeWidth="2" />
    <path d="M1380 498 1397 494.500V501.500Z" fill="#4169e1" />
    <path d="M1424 498V530" stroke="#7cc47f" strokeWidth="3" />
    <path d="M1420.500 526H1427.500L1424 543Z" fill="#008a00" />
    <circle cx="1424.500" cy="498.500" r="3" fill="#888" stroke="#e33" />
    <g fontFamily="Liberation Sans" fontSize="10" fontWeight="bold" textAnchor="middle">
      <text x="1368" y="502" fill="#4a5ac8">Z</text>
      <text x="1423" y="557" fill="#5bb560">Y</text>
      <text x="245" y="857" fill="#0000e0">Z</text>
      <text x="280" y="893" fill="#1b8a1b">Y</text>
    </g>

    {/* world triad */}
    <path d="M252 854H264M252 854 258 851V857Z" stroke="#0000e0" strokeWidth="1.500" fill="#0000e0" />
    <path d="M269.500 851V857M292 851V857" stroke="#0000e0" strokeWidth="2" />
    <path d="M278 842.500H283M278 865H283" stroke="#00a000" strokeWidth="2" />
    <rect x="271" y="844" width="20" height="20" fill="#e9fbfc" stroke="#c3d6e3" />
    <rect x="277" y="850" width="7" height="7" rx="2.500" fill="#f00" />
    <path d="M280.500 869V880M280.500 883 278 875H283Z" stroke="#00a000" strokeWidth="1.500" fill="#00a000" />

    <path d="M1461 882.500H1535" stroke="#3c3cf0" strokeWidth="2" />
    <text x="1498" y="895" fill="#5050f0" fontFamily="Liberation Sans" fontSize="10" textAnchor="middle">6mm</text>
  </svg>
)


/* ---------- quick guide ---------- */

const GuideDock = styled.aside`
  width: 234px;
  flex: none;
  display: flex;
  flex-direction: column;
  padding: 0 2px 1px 4px;
`
const GuideRow = styled.div`
  flex: 1;
  min-height: 0;
  display: flex;
`
const Guide = styled.article`
  flex: 1;
  min-width: 0;
  overflow: hidden;
  padding: 6px 12px 0;
  color: #222;
  font: 11px/15px ${UI};
  text-align: justify;
  h2 { margin: 0; color: #000; font-size: 17px; line-height: 21px; }
  p { margin: 0; }
  a { color: #1a6fd4; }
`
const Java = styled.div`
  padding: 17px 0 1px;
`
const Human = styled.p`
  font-family: ${HUMAN};
`
const Topics = styled.ul`
  margin: 0;
  padding: 10px 0 0;
  list-style: none;
  font-weight: bold;
  font-size: 12px;
  text-align: left;
`
const Topic = styled.a`
  && { color: ${p => p.$c}; }
  font-family: ${p => p.$human ? HUMAN : UI};
  font-size: ${p => p.$human ? 11 : 12}px;
  text-decoration-color: #4a8ad8;
`
const Chapter = styled.h3`
  margin: 19px 0 11px;
  color: #800080;
  font-size: 12px;
  line-height: 15px;
`
const Loose = styled.p`
  padding-top: 4px;
  line-height: 17px;
`
const VBar = styled.div`
  width: 15px;
  display: flex;
  flex-direction: column;
  align-items: center;
  padding: 14px 0 16px;
  background: #f0f0f0;
  > svg:last-child { margin-top: auto; }
`
const VThumb = styled.div`
  width: 13px;
  height: 32px;
  margin-top: 8px;
  background: #cdcdcd;
`
const HBar = styled.div`
  height: 15px;
  flex: none;
  display: flex;
  align-items: center;
  padding: 0 32px 0 15px;
  background: #f0f0f0;
  > svg:last-child { margin-left: auto; }
`
const HThumb = styled.div`
  width: 53px;
  height: 13px;
  margin-left: 8px;
  background: #cdcdcd;
`
const Chevron = ({ d }) => <Svg s={10} box="0 0 10 10"><path d={d} stroke="#505050" strokeWidth="2.500" /></Svg>

const topics = [
  ['Design navigation', '#800080'],
  ['Creating your first solid', '#ff0000'],
  ['Importing and Working with 3D Models', '#000080'],
  ['Generating Bill of Materials (BoM\u00a0/\u00a0BOM)', '#006400'],
  ['Ordering and Buying design components', '#0000ff'],
  ['Exporting your design', '#a52a2a'],
  ['Threading', '#ff1493'],
  ['Importing PCB layout', '#008000'],
  ['Adding dimension annotations', '#ffa500'],
]

const QuickGuide = () => (
  <GuideDock>
    <PanelTitle>Quick Guide<PinIcon /></PanelTitle>
    <GuideRow>
      <Guide>
        <h2>Getting started</h2>
        <p>This Quick Guide can be accessed at any time via the handy tab to the right of this text.</p>
        <p>Like with any software mastering the user interface and navigation takes a bit of practice. Please select a topic of interest below to learn your first steps in a variety of areas.</p>
        <p>If you would like us to add any specific{'\u00a0'}topic to this Quick Guide please{'\u00a0'}<a href="#support">contact support</a>.</p>
        <Java>
          <p><b><u>DSM Version 4.0 and below:</u></b> Make sure you have the current <b><a href="#java">Java</a></b> version installed.</p>
          <p>The installed Java <b>MUST</b> correspond to this software's version (32-bit or 64-bit). So, the 64-bit DesignSpark Mechanical will require the 64-bit Java version.</p>
        </Java>
        <Human>You will be asked to authorize a Java Applet '<b>Click2CAD</b>' by our approved publisher 'CADClick - KiM GmbH' to allow insertion of 3D models into your project. Please allow it to run, it has been anti-virus scanned.</Human>
        <Topics>
          {topics.map(([t, c]) => <li key={t}><Topic href="#topic" $c={c}>{t}</Topic></li>)}
          <li><Topic href="#topic" $c="#ff1493" $human>Changing object sizes and relative positions</Topic></li>
        </Topics>
        <Chapter>Design navigation</Chapter>
        <Human><a href="#topics">back to topics list</a></Human>
        <Loose>The content below will guide you with navigating 3D models in DesignSpark Mechanical. Mouse control combinations are needed{'\u00a0'}throughout.</Loose>
      </Guide>
      <VBar>
        <Chevron d="M0 7 5 2 10 7" /><VThumb /><Chevron d="M0 3 5 8 10 3" />
      </VBar>
    </GuideRow>
    <HBar>
      <Chevron d="M7 0 2 5 7 10" /><HThumb /><Chevron d="M3 0 8 5 3 10" />
    </HBar>
  </GuideDock>
)


/* ---------- status bar and taskbar ---------- */

const StatusBar = styled.footer`
  height: 29px;
  flex: none;
  display: flex;
  align-items: center;
  background: ${BLUE};
  color: #fff;
`
const StatusText = styled.span`
  flex: 1;
  padding-left: 8px;
`
const StatusCell = styled.span`
  width: ${p => p.$w}px;
  height: 23px;
  display: flex;
  align-items: center;
  gap: 5px;
  padding-left: 5px;
  border-left: 1px solid #7795b3;
`
const StatusTools = styled.div`
  width: 250px;
  height: 29px;
  display: flex;
  align-items: center;
  justify-content: space-between;
  padding-right: 22px;
  > button { height: 27px; padding: 0 1px; gap: 4px; }
`
const PanOn = styled.button`
  && { padding: 0 4px; background: #1c4a74; }
`
const TaskBar = styled.footer`
  height: 37px;
  flex: none;
  display: flex;
  background: linear-gradient(90deg, #3a372b, #40382c 50%, #332c25 80%, #454545);
  color: #f3f3f3;
  font: 10px/17px ${HUMAN};
`
const Start = styled.button`
  width: 45px;
  justify-content: center;
  background: #424242;
`
const Search = styled.label`
  width: 318px;
  display: flex;
  align-items: center;
  gap: 10px;
  padding-left: 10px;
  border: 1px solid #ababab;
  background: #f2f2f2;
  input {
    flex: 1;
    min-width: 0;
    padding: 0;
    border: 0;
    background: none;
    font: 14px/20px ${HUMAN};
  }
  input::placeholder { color: #444; opacity: 1; }
`
const Apps = styled.div`
  display: flex;
  padding-left: 2px;
`
const AppButton = styled.button`
  width: 45px;
  justify-content: center;
  padding-top: 3px;
  border-bottom: 3px solid ${p => p.$open ? '#f6d57c' : 'transparent'};
  background: ${p => p.$on ? '#65615b' : 'none'};
  background-clip: padding-box;
`
const Tray = styled.div`
  margin-left: auto;
  display: flex;
  align-items: center;
  gap: 8px;
  padding-right: 4px;
`
const Clock = styled.time`
  padding: 0 8px 0 4px;
  text-align: center;
`
const Notices = styled.button`
  height: 37px;
  padding-right: 18px;
  border-right: 1px solid #8a8a8a;
`

const light = '#7dc0ff'

const Status = () => (
  <StatusBar>
    <StatusText>Click an object. Double-click to select an edge loop. Triple-click to select a solid.</StatusText>
    <StatusCell $w={141} />
    <StatusCell $w={34}>
      <Svg><circle cx="8" cy="8" r="7.500" fill="#e02020" /><path d="M8 3V9M8 11V13" stroke="#fff" strokeWidth="2.200" /></Svg><Caret up color="#fff" />
    </StatusCell>
    <StatusCell $w={141} />
    <StatusCell $w={216} />
    <StatusTools>
      <Svg w={8} h={16} box="0 0 8 16"><path d="M0 6 4 1 8 6ZM0 10 4 15 8 10Z" fill="#8295a8" /></Svg>
      <button aria-label="Revert selection"><Svg s={15}><path d="M1 2 8 9 5 9.500 7 14 5 15 3 10.500 1 12Z" fill="#fff" /><path d="M9 3C15 2 17 9 11 14" stroke={light} strokeWidth="2" /><path d="M7 3.500 11 0V7Z" fill={light} /></Svg></button>
      <button aria-label="Select"><Svg s={15}><path d="M4 1 13 9 9 9.500 11 14 9 15 7 10.500 4 13Z" fill="#fff" /></Svg><Caret up color="#fff" /></button>
      <button aria-label="Box select"><Svg s={16}><path d="M1 3H15V13H1Z" stroke={light} strokeWidth="1.700" strokeDasharray="3 1.500" /></Svg><Caret up color="#fff" /></button>
      <Rule />
      <button aria-label="Spin"><SpinIcon color={light} /><Caret up color="#fff" /></button>
      <PanOn aria-label="Pan"><PanIcon color={light} /></PanOn>
      <button aria-label="Zoom"><ZoomIcon color={light} fill="#fff" /><Caret up color="#fff" /></button>
      <button aria-label="Previous view"><Svg s={15}><path d="M15 3 6 9" stroke={light} strokeWidth="3.500" /><path d="M0 13 4 5 10 12Z" fill={light} /></Svg></button>
      <button aria-label="Next view"><Svg s={15}><path d="M1 13 10 7" stroke="#8295a8" strokeWidth="3.500" /><path d="M16 3 12 11 6 4Z" fill="#8295a8" /></Svg></button>
    </StatusTools>
  </StatusBar>
)

const Desktop = () => (
  <TaskBar>
    <Start aria-label="Start"><Svg s={16}><path d="M0 2.500 7 1.500V7.500H0ZM8 1.300 16 0V7.500H8ZM0 8.500H7V14.500L0 13.500ZM8 8.500H16V16L8 14.700Z" fill="#fff" /></Svg></Start>
    <Search>
      <Svg s={16}><circle cx="10" cy="6" r="5" stroke="#333" strokeWidth="1.200" /><path d="M6.500 9.500 1 15" stroke="#333" strokeWidth="1.300" /></Svg>
      <input placeholder="Type here to search" aria-label="Search" />
    </Search>
    <Apps>
      <AppButton aria-label="Files"><Svg s={22} box="0 0 22 22"><path d="M1 3H8L10 5H21V19H1Z" fill="#f9ce5c" /><path d="M1 3H8L10 5V7H1Z" fill="#e0a025" /><path d="M5 12H17V19H14V16H8V19H5Z" fill="#3f9be0" /></Svg></AppButton>
      <AppButton aria-label="Arduino"><Svg s={22} box="0 0 22 22"><circle cx="11" cy="11" r="10.500" fill="#18989e" /><circle cx="7.500" cy="11" r="2.600" stroke="#fff" strokeWidth="1.400" /><circle cx="14.500" cy="11" r="2.600" stroke="#fff" strokeWidth="1.400" /></Svg></AppButton>
      <AppButton $open aria-label="Mail"><Svg s={22} box="0 0 22 22"><path d="M5 2C13-2 22 4 21 12 20 19 13 23 9 21 14 17 13 9 3 9Z" fill="#1d62c4" /><path d="M3 5C7 0 15 1 18 6 14 5 8 6 5 10Z" fill="#4aa3ee" /><path d="M1 11 13 8 15 15 9 20 3 18Z" fill="#f0f3f8" /><path d="M1 11 9 14 13 8" stroke="#9fb3cc" /></Svg></AppButton>
      <AppButton $open aria-label="Firefox"><Svg s={22} box="0 0 22 22"><path d="M2 6 4 2 7 5C10 4 11 3 14 0 15 4 20 4 21 11 21 18 16 22 11 22 5 22 0 18 1 11Z" fill="#ff6a2b" /><path d="M14 0C14 5 20 6 19 12 18 8 15 7 12 6Z" fill="#ffd84a" /><circle cx="11" cy="12" r="5" fill="#7b3fe0" /><path d="M2 8C5 9 9 7 12 10 9 10 9 12 7 13 5 17 11 19 15 16 12 22 2 20 2 12Z" fill="#ff9a2e" /></Svg></AppButton>
      <AppButton $open $on aria-label="DesignSpark Mechanical"><Logo s={23} /></AppButton>
    </Apps>
    <Tray>
      <Svg s={16}><rect x="2" y="3" width="12" height="5" rx="2" fill="#ccc" /><rect x="1" y="8" width="12" height="5" fill="#999" /><path d="M8 8 15 15M15 8 8 15" stroke="#d22" strokeWidth="2" /></Svg>
      <Svg s={14}><circle cx="7" cy="9" r="6.500" fill="#1d5ba5" /><path d="M3 13 8 8M6 5 11 10" stroke="#fff" strokeWidth="2" /><circle cx="13" cy="3" r="3" fill="#f06a35" /></Svg>
      <Svg w={12} h={16} box="0 0 12 16"><rect width="12" height="16" rx="5" fill="#0a84f0" /><path d="M3 5 9 11 6 13.500V2.500L9 5 3 11" stroke="#fff" strokeWidth="1.200" /></Svg>
      <Svg s={16}><path d="M1 6H4L7 3V13L4 10H1Z" stroke="#eee" /><path d="M9 6Q10.500 8 9 10M11 4Q14 8 11 12M13 2Q17.500 8 13 14" stroke="#eee" /></Svg>
      <Svg s={14}><path d="M1 15C1 7 7 1 15 1M5 15C5 9 9 5 15 5M9 15C9 11 11 9 15 9" stroke="#bbb" strokeWidth="1.500" /><circle cx="13" cy="13.500" r="1.800" fill="#eee" /></Svg>
      <Svg w={21} h={14} box="0 0 21 14"><rect x=".5" y="1.500" width="20" height="11" stroke="#eee" /><path d="M3 4.500H18M3 7H18M5 10H16" stroke="#eee" strokeDasharray="2 1" /></Svg>
      <span>ENG</span>
      <Clock>16:53<br />08/08/2021</Clock>
      <Notices aria-label="Notifications"><Svg s={16}><path d="M1 2H15V12H11L8 15V12H1Z" stroke="#fff" strokeWidth="1.200" /></Svg></Notices>
    </Tray>
  </TaskBar>
)


function App() {
  const [tab, setTab] = useState('Design')

  return (
    <Page>
      <GlobalStyle />
      <TitleBar>
        <QuickAccess>
          <Logo s={15} /><Rule />
          <Spaced><Svg s={14}><path d="M1 3H6L8 5H14V14H1Z" fill="#d99b3c" /><path d="M1 14 4 7H16L13 14Z" fill="#f7c978" /></Svg></Spaced>
          <Spaced><Svg s={13}><path d="M1 1H15V15H1Z" fill="#2ea7e0" /><path d="M4 9H12V15H4Z" fill="#fff" /><path d="M9 11H11V15H9Z" fill="#2ea7e0" /></Svg></Spaced>
          <Svg s={14}><path d="M3 5C10 1 16 6 12 11L9 14" stroke="#dbe6f3" strokeWidth="2.500" /><path d="M0 6 6 0V9Z" fill="#dbe6f3" /></Svg>
          <Caret color="#8fa8c0" />
          <Svg s={14}><path d="M13 5C6 1 0 6 4 11L7 14" stroke="#69b0f5" strokeWidth="2.500" /><path d="M16 6 10 0V9Z" fill="#69b0f5" /></Svg>
          <Caret color="#fff" />
          <Svg w={12} h={7} box="6 0 12 7"><path d="M12 .5H17M12.500 3H16.500L14.500 5.500Z" stroke="#cfdbe8" /></Svg>
        </QuickAccess>
        <AppTitle>BoxDesign4 - DesignSpark Mechanical</AppTitle>
        <WindowButtons>
          <button aria-label="Minimise"><Svg w={10} h={11} box="0 0 10 11"><path d="M1 5.500H9" stroke="#fff" strokeWidth="2" /></Svg></button>
          <button aria-label="Restore"><Svg s={11} box="0 0 11 11"><path d="M3.500 3.500V1.500H10.500V6.500H8" stroke="#fff" /><path d="M.5 4.500H7.500V9.500H.5ZM.5 5H7.500" stroke="#fff" /></Svg></button>
          <button aria-label="Close"><Cross s={11} color="#fff" width={1.800} /></button>
        </WindowButtons>
      </TitleBar>
      <TabRow>
        {['File', 'Design', 'Display', 'Measure', 'Help / Resources'].map(t => (
          <RibbonTab key={t} $active={tab === t} $hover={t === 'Display'} onClick={() => setTab(t)}>{t}</RibbonTab>
        ))}
        <TabEnd><Caret up color="#e8e8e8" /><HelpDot>?</HelpDot></TabEnd>
      </TabRow>
      <RibbonBar />
      <Workspace>
        <LeftDock>
          <StructurePanel />
          <CameraPanel />
          <Panel $grow={207}>
            <PanelTitle>Options - Selection<PinIcon /></PanelTitle>
            <PanelBody />
            <PanelTabs><PanelTab $on>Options - Selection</PanelTab><PanelTab>Selection</PanelTab></PanelTabs>
          </Panel>
        </LeftDock>
        <Center>
          <Viewport>
            <Model />
            <Hint>Click an object. Double-click to select an edge loop. Triple-click to select a solid.</Hint>
          </Viewport>
          <DocTabs>
            <DocTab><Logo s={14} plain />Start Page</DocTab>
            <DocTab><DocIcon />BoxDesign5</DocTab>
            <DocTab><SolidIcon s={15} />Design5*</DocTab>
            <DocTab $on><DocIcon />BoxDesign4*<Cross /></DocTab>
            <DocTabEnd>
              <Svg w={6} h={9} box="0 0 6 9"><path d="M5 1V8L1 4.500Z" stroke="#555" /></Svg>
              <Svg w={6} h={9} box="0 0 6 9"><path d="M1 1V8L5 4.500Z" stroke="#555" /></Svg>
              <Cross />
            </DocTabEnd>
          </DocTabs>
        </Center>
        <QuickGuide />
      </Workspace>
      <Status />
      <Desktop />
    </Page>
  )
}

export default App
